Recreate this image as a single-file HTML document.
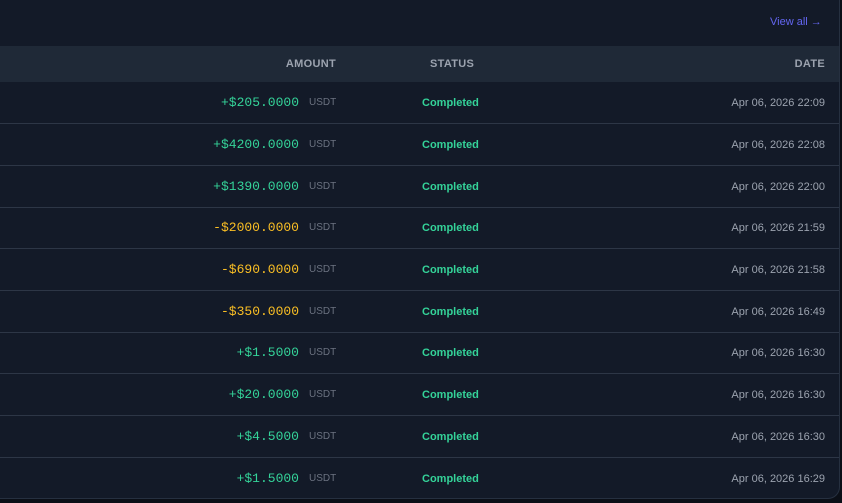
<!DOCTYPE html>
<html><head><style>
body{margin:0;width:842px;height:503px;background:#0b0f17;overflow:hidden;font-family:"Liberation Sans",sans-serif}
.card{position:absolute;left:-20px;top:-20px;width:858px;height:517px;background:#131a28;border:1px solid #263040;border-radius:12px;overflow:hidden}
.va{position:absolute;left:789px;top:35px;font-size:11px;color:#6366f1}
.hd{position:absolute;left:0;top:65px;width:100%;height:36px;background:#1f2937;font-size:11px;font-weight:bold;color:#9ca3af;letter-spacing:.3px}
.hd span,.r span{position:absolute;top:0;line-height:36px}
.r{position:absolute;left:0;width:100%;height:41px;border-bottom:1px solid #2d3646}
.r span{line-height:42px}
.amt{right:540px;font-family:"Liberation Mono",monospace;font-size:13px}
.u{left:328px;font-size:10px;color:#6b7280}
.st{left:441px;font-size:11px;font-weight:bold;color:#34d399}
.dt{right:14px;font-size:11px;color:#9ca3af}
.g{color:#34d399}.o{color:#fbbf24}
</style></head><body><div class="card">
<div class="va">View all →</div>
<div class="hd"><span style="right:503px">AMOUNT</span><span style="left:449px">STATUS</span><span style="right:14px">DATE</span></div>
<div class="r" style="top:101px"><span class="amt g">+$205.0000</span><span class="u">USDT</span><span class="st">Completed</span><span class="dt">Apr 06, 2026 22:09</span></div>
<div class="r" style="top:143px"><span class="amt g">+$4200.0000</span><span class="u">USDT</span><span class="st">Completed</span><span class="dt">Apr 06, 2026 22:08</span></div>
<div class="r" style="top:185px"><span class="amt g">+$1390.0000</span><span class="u">USDT</span><span class="st">Completed</span><span class="dt">Apr 06, 2026 22:00</span></div>
<div class="r" style="top:226px"><span class="amt o">-$2000.0000</span><span class="u">USDT</span><span class="st">Completed</span><span class="dt">Apr 06, 2026 21:59</span></div>
<div class="r" style="top:268px"><span class="amt o">-$690.0000</span><span class="u">USDT</span><span class="st">Completed</span><span class="dt">Apr 06, 2026 21:58</span></div>
<div class="r" style="top:310px"><span class="amt o">-$350.0000</span><span class="u">USDT</span><span class="st">Completed</span><span class="dt">Apr 06, 2026 16:49</span></div>
<div class="r" style="top:351px"><span class="amt g">+$1.5000</span><span class="u">USDT</span><span class="st">Completed</span><span class="dt">Apr 06, 2026 16:30</span></div>
<div class="r" style="top:393px"><span class="amt g">+$20.0000</span><span class="u">USDT</span><span class="st">Completed</span><span class="dt">Apr 06, 2026 16:30</span></div>
<div class="r" style="top:435px"><span class="amt g">+$4.5000</span><span class="u">USDT</span><span class="st">Completed</span><span class="dt">Apr 06, 2026 16:30</span></div>
<div class="r" style="top:477px;border:none"><span class="amt g">+$1.5000</span><span class="u">USDT</span><span class="st">Completed</span><span class="dt">Apr 06, 2026 16:29</span></div>
</div></body></html>
